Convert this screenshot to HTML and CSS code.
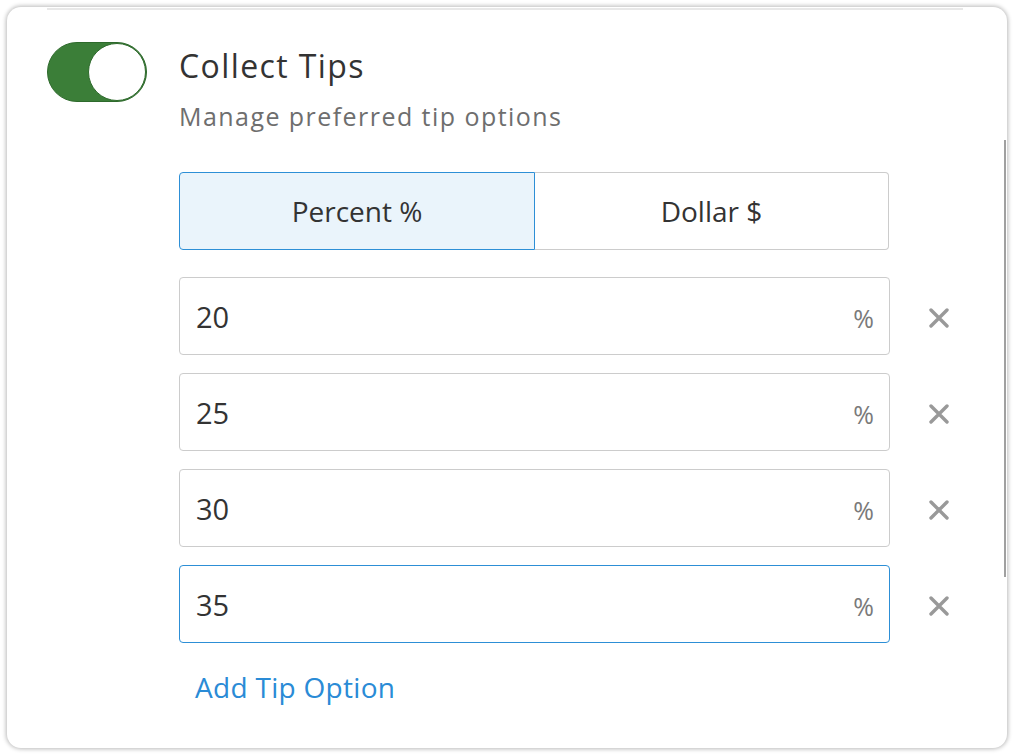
FILE: index.html
```html
<!DOCTYPE html>
<html>
<head>
<meta charset="utf-8">
<link rel="stylesheet" href="styles.css">
</head>
<body>
<div class="page">
  <div class="card">
    <div class="sep"></div>
    <div class="setting">
      <div class="toggle"><div class="knob"></div></div>
      <div class="content">
        <div class="title">Collect Tips</div>
        <div class="subtitle">Manage preferred tip options</div>
        <div class="segmented">
          <div class="seg seg-active">Percent %</div>
          <div class="seg">Dollar $</div>
        </div>
        <div class="options">
          <div class="option">
            <div class="field"><span class="val">20</span><span class="unit">%</span></div>
            <span class="remove"><svg width="20" height="20" viewBox="0 0 20 20"><path d="M2 2 L18 18 M18 2 L2 18" stroke="#999" stroke-width="3.4" stroke-linecap="round"/></svg></span>
          </div>
          <div class="option">
            <div class="field"><span class="val">25</span><span class="unit">%</span></div>
            <span class="remove"><svg width="20" height="20" viewBox="0 0 20 20"><path d="M2 2 L18 18 M18 2 L2 18" stroke="#999" stroke-width="3.4" stroke-linecap="round"/></svg></span>
          </div>
          <div class="option">
            <div class="field"><span class="val">30</span><span class="unit">%</span></div>
            <span class="remove"><svg width="20" height="20" viewBox="0 0 20 20"><path d="M2 2 L18 18 M18 2 L2 18" stroke="#999" stroke-width="3.4" stroke-linecap="round"/></svg></span>
          </div>
          <div class="option">
            <div class="field field-focus"><span class="val">35</span><span class="unit">%</span></div>
            <span class="remove"><svg width="20" height="20" viewBox="0 0 20 20"><path d="M2 2 L18 18 M18 2 L2 18" stroke="#999" stroke-width="3.4" stroke-linecap="round"/></svg></span>
          </div>
        </div>
        <a class="add" href="#">Add Tip Option</a>
      </div>
    </div>
    <div class="scrollbar"></div>
  </div>
</div>
</body>
</html>
```
FILE: styles.css
```css
html, body {
  margin: 0;
  background: #ffffff;
}
body {
  font-family: "Open Sans", "Noto Sans", "Liberation Sans", sans-serif;
  color: #333333;
}
.page {
  padding: 7px;
}
.card {
  position: relative;
  width: 1000px;
  height: 741px;
  box-sizing: border-box;
  border-radius: 14px;
  box-shadow: 0 0 4px 1px rgba(0, 0, 0, 0.28);
  padding: 0 44px 0 40px;
  background: #fff;
  overflow: hidden;
}
.sep {
  height: 2px;
  margin-top: 1px;
  background: #e8e8e8;
  width: 916px;
}
.setting {
  display: flex;
  gap: 32px;
  margin-top: 32px;
}
.toggle {
  flex: none;
  width: 100px;
  height: 60px;
  box-sizing: border-box;
  border-radius: 30px;
  background: #3b7e38;
  border: 1px solid #2e6a2c;
  display: flex;
  justify-content: flex-end;
  align-items: center;
}
.knob {
  width: 58px;
  height: 58px;
  box-sizing: border-box;
  border-radius: 50%;
  background: #fff;
  border: 1.5px solid #2e6a2c;
}
.content {
  width: 711px;
  display: flex;
  flex-direction: column;
  align-items: flex-start;
}
.title {
  font-size: 32px;
  line-height: 40px;
  margin-top: 4px;
  letter-spacing: 1.4px;
  color: #333;
}
.subtitle {
  font-size: 25px;
  line-height: 30px;
  margin-top: 15px;
  letter-spacing: 1.45px;
  color: #6e6e6e;
}
.segmented {
  display: flex;
  width: 710px;
  height: 78px;
  margin-top: 41px;
}
.seg {
  flex: 1;
  box-sizing: border-box;
  display: flex;
  align-items: center;
  justify-content: center;
  font-size: 28px;
  border: 1px solid #cccccc;
  border-left: none;
  border-radius: 0 4px 4px 0;
  color: #333;
}
.seg-active {
  flex: 0 0 356px;
  border: 1px solid #2d8fd6;
  border-radius: 4px 0 0 4px;
  background: #eaf4fb;
}
.options {
  display: flex;
  flex-direction: column;
  gap: 18px;
  margin-top: 27px;
}
.option {
  display: flex;
  align-items: center;
  gap: 39px;
}
.field {
  width: 711px;
  height: 78px;
  box-sizing: border-box;
  border: 1px solid #cccccc;
  border-radius: 4px;
  display: flex;
  align-items: center;
  justify-content: space-between;
  padding: 0 15px 0 16px;
}
.field-focus {
  border-color: #2d8fd6;
}
.val {
  font-size: 29px;
  color: #333;
}
.unit {
  font-size: 25px;
  color: #7a7a7a;
  margin-top: 4px;
}
.remove {
  display: flex;
  margin-top: 4px;
}
.add {
  margin-top: 27px;
  margin-left: 16px;
  font-size: 28px;
  line-height: 34px;
  letter-spacing: 0.3px;
  color: #2a8bd6;
  text-decoration: none;
}
.scrollbar {
  position: absolute;
  right: 1px;
  top: 133px;
  width: 2px;
  height: 437px;
  background: #a0a0a0;
}
```
